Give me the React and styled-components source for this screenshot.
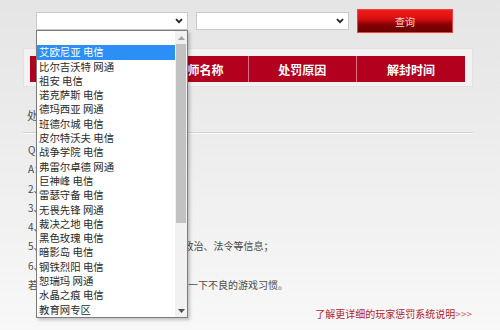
import React from 'react';
import styled, {createGlobalStyle} from 'styled-components';

const GlobalStyle = createGlobalStyle`
  html, body {
    margin: 0;
    padding: 0;
  }
  body {
    width: 500px;
    height: 330px;
    overflow: hidden;
    background: linear-gradient(180deg, #e5e5e5 0%, #ececec 40%, #f8f8f8 100%);
    font-family: "Noto Sans CJK SC", "Noto Sans", sans-serif;
    color: #444;
  }
`;

const Page = styled.div`
  width: 500px;
  height: 330px;
  display: flex;
  flex-direction: column;
`;

const SearchBar = styled.div`
  display: flex;
  align-items: center;
  gap: 8px;
  padding: 9px 0 0 36px;
  height: 24px;
`;

const SelectBox = styled.div`
  position: relative;
  width: ${p => p.$width}px;
  height: 18px;
  box-sizing: border-box;
  background: #fff;
  border: 1px solid #c9c9c9;
  display: flex;
  align-items: center;
  justify-content: flex-end;
  padding-right: 4px;
`;

const Chevron = () => (
  <svg width="8" height="6" viewBox="0 0 8 6">
    <path d="M1 1.2 L4 4.2 L7 1.2" fill="none" stroke="#222" strokeWidth="1.8" />
  </svg>
);

const QueryButton = styled.button`
  width: 96px;
  height: 24px;
  box-sizing: border-box;
  border: 1px solid #f0403c;
  background: linear-gradient(180deg, #f01c1c 0%, #d80f10 40%, #8a0204 65%, #6a0000 100%);
  color: #f3d6d6;
  font-family: inherit;
  font-size: 10px;
  padding: 0;
`;

const Dropdown = styled.div`
  position: absolute;
  left: -1px;
  top: 17px;
  width: 152px;
  height: 288px;
  box-sizing: border-box;
  background: #fff;
  border: 1px solid #7c7c7c;
  box-shadow: 2px 2px 3px rgba(0, 0, 0, 0.22);
  display: flex;
  z-index: 5;
`;

const OptionList = styled.div`
  flex: 1;
  display: flex;
  flex-direction: column;
`;

const Option = styled.div`
  height: 14.3px;
  line-height: 14.3px;
  padding-left: 2px;
  font-size: 10.4px;
  white-space: nowrap;
  color: ${p => (p.$active ? '#fff' : '#2a2a2a')};
  background: ${p => (p.$active ? '#2b8ff5' : 'transparent')};
`;

const ScrollBar = styled.div`
  width: 12px;
  background: #f1f1f1;
  display: flex;
  flex-direction: column;
  align-items: center;
`;

const ScrollArrow = styled.div`
  height: 13px;
  display: flex;
  align-items: center;
  justify-content: center;
`;

const ScrollTrack = styled.div`
  flex: 1;
  width: 100%;
  display: flex;
  flex-direction: column;
`;

const ScrollThumb = styled.div`
  height: 179px;
  margin: 0 1px;
  background: #c2c2c2;
`;

const Arrow = ({down}) => (
  <svg width="7" height="4" viewBox="0 0 7 4">
    <path d={down ? 'M0 0 L7 0 L3.5 4 Z' : 'M0 4 L7 4 L3.5 0 Z'} fill={down ? '#505050' : '#a3a3a3'} />
  </svg>
);

const TablePanel = styled.div`
  margin: 15px 0 0 23px;
  width: 450px;
  height: 39px;
  box-sizing: border-box;
  padding: 7px 7px 6px 6px;
  background: #f2f2f2;
  border: 1px solid #e2e2e2;
`;

const HeaderRow = styled.div`
  display: grid;
  grid-template-columns: repeat(4, 1fr);
  height: 26px;
  background: #b3001e;
`;

const HeaderCell = styled.div`
  display: flex;
  align-items: center;
  justify-content: center;
  color: #fff;
  font-size: 12px;
  font-weight: 700;
  border-left: ${p => (p.$first ? 'none' : '1px solid #d9707f')};
`;

const Notice = styled.div`
  margin: 18px 0 0 23px;
  width: 450px;
`;

const NoticeTitle = styled.div`
  padding: 0 0 7px 4px;
  line-height: 20px;
  font-size: 11px;
  color: #555;
  border-bottom: 1px solid #d3d3d3;
  box-shadow: 0 1px 0 #f9f9f9;
`;

const NoticeBody = styled.div`
  padding: 7px 0 0 5px;
  display: flex;
  flex-direction: column;
`;

const NoticeLine = styled.div`
  height: 19.3px;
  line-height: 19.3px;
  font-size: 10px;
  color: #4a4a4a;
  white-space: nowrap;
`;

const MoreLink = styled.a`
  align-self: flex-end;
  margin: 13px 28px 0 0;
  font-size: 10px;
  color: #b0242c;
  text-decoration: none;
  line-height: 14px;

  span {
    color: #d0606a;
  }
`;

const servers = [
  '艾欧尼亚 电信',
  '比尔吉沃特 网通',
  '祖安 电信',
  '诺克萨斯 电信',
  '德玛西亚 网通',
  '班德尔城 电信',
  '皮尔特沃夫 电信',
  '战争学院 电信',
  '弗雷尔卓德 网通',
  '巨神峰 电信',
  '雷瑟守备 电信',
  '无畏先锋 网通',
  '裁决之地 电信',
  '黑色玫瑰 电信',
  '暗影岛 电信',
  '钢铁烈阳 电信',
  '恕瑞玛 网通',
  '水晶之痕 电信',
  '教育网专区',
];

const columns = ['服务器', '召唤师名称', '处罚原因', '解封时间'];

const notes = [
  'Q：我为什么会被处罚？',
  'A：1、使用非法第三方软件；',
  '2、消极比赛、恶意挂机；',
  '3、恶意送人头；',
  '4、辱骂其他玩家；',
  '5、发布或传播色情、暴力、反动、政治、法令等信息；',
  '6、利用游戏漏洞牟利；',
  '若您的账号受到处罚，请您好好反思一下不良的游戏习惯。',
];

export default function App() {
  return (
    <>
      <GlobalStyle />
      <Page>
        <SearchBar>
          <SelectBox $width={152}>
            <Chevron />
            <Dropdown>
              <OptionList>
                <Option />
                {servers.map((s, i) => (
                  <Option key={s} $active={i === 0}>{s}</Option>
                ))}
              </OptionList>
              <ScrollBar>
                <ScrollArrow><Arrow /></ScrollArrow>
                <ScrollTrack>
                  <ScrollThumb />
                </ScrollTrack>
                <ScrollArrow><Arrow down /></ScrollArrow>
              </ScrollBar>
            </Dropdown>
          </SelectBox>
          <SelectBox $width={153}>
            <Chevron />
          </SelectBox>
          <QueryButton>查询</QueryButton>
        </SearchBar>

        <TablePanel>
          <HeaderRow>
            {columns.map((c, i) => (
              <HeaderCell key={c} $first={i === 0}>{c}</HeaderCell>
            ))}
          </HeaderRow>
        </TablePanel>

        <Notice>
          <NoticeTitle>处罚说明</NoticeTitle>
          <NoticeBody>
            {notes.map(n => (
              <NoticeLine key={n}>{n}</NoticeLine>
            ))}
          </NoticeBody>
        </Notice>

        <MoreLink href="#">了解更详细的玩家惩罚系统说明<span>&gt;&gt;&gt;</span></MoreLink>
      </Page>
    </>
  );
}
